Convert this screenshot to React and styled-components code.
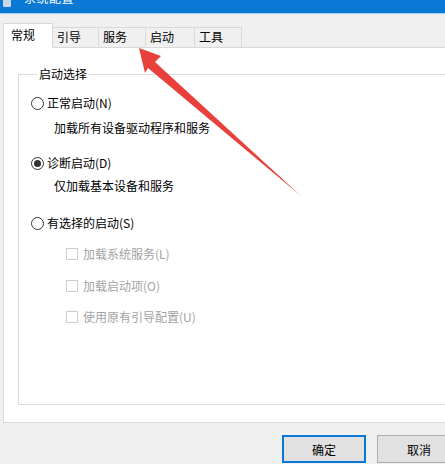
import React from 'react';
import styled, { createGlobalStyle } from 'styled-components';

const GlobalStyle = createGlobalStyle`
  html, body {
    margin: 0;
    padding: 0;
    background: #f0f0f0;
  }
  body {
    font-family: "Noto Sans CJK SC", "Liberation Sans", sans-serif;
    font-size: 12px;
    color: #000;
  }
`;

const Window = styled.div`
  position: relative;
  width: 445px;
  height: 464px;
  overflow: hidden;
  display: flex;
  flex-direction: column;
  background: #f0f0f0;
`;

const TitleBar = styled.div`
  height: 13px;
  flex-shrink: 0;
  background: #0a78d4;
  border-bottom: 1px solid #9fd0f5;
  display: flex;
  align-items: flex-end;
  padding-left: 3px;
  overflow: hidden;
`;

const TitleIcon = styled.div`
  width: 8px;
  height: 8px;
  margin-bottom: 6px;
  background: #c9d6e4;
  border-radius: 1px;
`;

const TitleText = styled.div`
  margin-left: 13px;
  color: #fff;
  font-size: 12px;
  line-height: 16px;
  margin-bottom: 7px;
  letter-spacing: 0.5px;
`;

const TabStrip = styled.div`
  height: 33px;
  flex-shrink: 0;
  display: flex;
  align-items: flex-end;
  padding-left: 3px;
  position: relative;
  z-index: 1;
`;

const Tab = styled.div`
  width: ${p => p.$w}px;
  box-sizing: border-box;
  height: ${p => (p.$active ? 25 : 21)}px;
  padding-left: ${p => (p.$active ? 7 : 4)}px;
  padding-top: ${p => (p.$active ? 3 : 1)}px;
  line-height: 16px;
  background: ${p => (p.$active ? '#fff' : '#f0f0f0')};
  border: 1px solid #d9d9d9;
  border-bottom: ${p => (p.$active ? '1px solid #fff' : '1px solid #d9d9d9')};
  border-left: ${p => (p.$first ? '1px solid #d9d9d9' : 'none')};
  font-size: 12px;
  margin-bottom: -1px;
`;

const Panel = styled.div`
  flex: 1;
  margin-left: 3px;
  background: #fff;
  border: 1px solid #d9d9d9;
  border-right: none;
  padding: 18px 0 17px 14px;
  display: flex;
  flex-direction: column;
`;

const GroupBox = styled.fieldset`
  flex: 1;
  margin: 0;
  padding: 12px 0 0 12px;
  border: 1px solid #dcdcdc;
  border-right: none;
  min-width: 0;
`;

const Legend = styled.legend`
  margin-left: 6px;
  padding: 0 2px;
  font-size: 12px;
  line-height: 16px;
`;

const OptionRow = styled.label`
  display: flex;
  align-items: center;
  height: 18px;
  margin-top: ${p => p.$mt || 0}px;
  margin-left: ${p => p.$ml || 0}px;
  color: ${p => (p.$disabled ? '#a3a3a3' : '#000')};
  line-height: 18px;
  font-size: 12px;
`;

const Radio = styled.span`
  width: 13px;
  height: 13px;
  box-sizing: border-box;
  border: 1px solid #333;
  border-radius: 50%;
  display: inline-flex;
  align-items: center;
  justify-content: center;
  margin-right: 3px;
  flex-shrink: 0;

  &::after {
    content: '';
    width: 7px;
    height: 7px;
    border-radius: 50%;
    background: #333;
    display: ${p => (p.$checked ? 'block' : 'none')};
  }
`;

const CheckBox = styled.span`
  width: 12px;
  height: 12px;
  box-sizing: border-box;
  border: 1px solid #cccccc;
  background: #fff;
  margin-right: 5px;
  flex-shrink: 0;
`;

const Description = styled.div`
  margin-top: ${p => p.$mt}px;
  margin-left: 23px;
  height: 18px;
  line-height: 18px;
  font-size: 12px;
`;

const Footer = styled.div`
  height: 41px;
  flex-shrink: 0;
  display: flex;
  justify-content: flex-end;
  align-items: flex-start;
  gap: 11px;
  padding-top: 12px;
  box-sizing: border-box;
  margin-right: -16px;
`;

const Button = styled.div`
  width: 84px;
  height: 28px;
  box-sizing: border-box;
  background: #e1e1e1;
  border: ${p => (p.$default ? '2px solid #0a78d4' : '1px solid #adadad')};
  display: flex;
  align-items: center;
  justify-content: center;
  font-size: 12px;
`;

const Arrow = styled.svg`
  position: absolute;
  left: 0;
  top: 0;
  pointer-events: none;
`;

const tabs = [
  { label: '常规', w: 50, active: true },
  { label: '引导', w: 46 },
  { label: '服务', w: 47 },
  { label: '启动', w: 49 },
  { label: '工具', w: 47 },
];

export default function App() {
  return (
    <Window>
      <GlobalStyle />
      <TitleBar>
        <TitleIcon />
        <TitleText>系统配置</TitleText>
      </TitleBar>

      <TabStrip>
        {tabs.map((t, i) => (
          <Tab key={t.label} $w={t.w} $active={t.active} $first={i === 0}>
            {t.label}
          </Tab>
        ))}
      </TabStrip>

      <Panel>
        <GroupBox>
          <Legend>启动选择</Legend>

          <OptionRow>
            <Radio />
            正常启动(N)
          </OptionRow>
          <Description $mt={7}>加载所有设备驱动程序和服务</Description>

          <OptionRow $mt={17}>
            <Radio $checked />
            诊断启动(D)
          </OptionRow>
          <Description $mt={5}>仅加载基本设备和服务</Description>

          <OptionRow $mt={19}>
            <Radio />
            有选择的启动(S)
          </OptionRow>

          <OptionRow $mt={13} $ml={35} $disabled>
            <CheckBox />
            加载系统服务(L)
          </OptionRow>
          <OptionRow $mt={14} $ml={35} $disabled>
            <CheckBox />
            加载启动项(O)
          </OptionRow>
          <OptionRow $mt={13} $ml={35} $disabled>
            <CheckBox />
            使用原有引导配置(U)
          </OptionRow>
        </GroupBox>
      </Panel>

      <Footer>
        <Button $default>确定</Button>
        <Button>取消</Button>
      </Footer>

      {/* red annotation arrow pointing at the 服务 tab */}
      <Arrow width="445" height="464" viewBox="0 0 445 464">
        <polygon
          points="139,48 161,56 155,62 301,196 148,68 145,73"
          fill="#e8413c"
        />
      </Arrow>
    </Window>
  );
}
